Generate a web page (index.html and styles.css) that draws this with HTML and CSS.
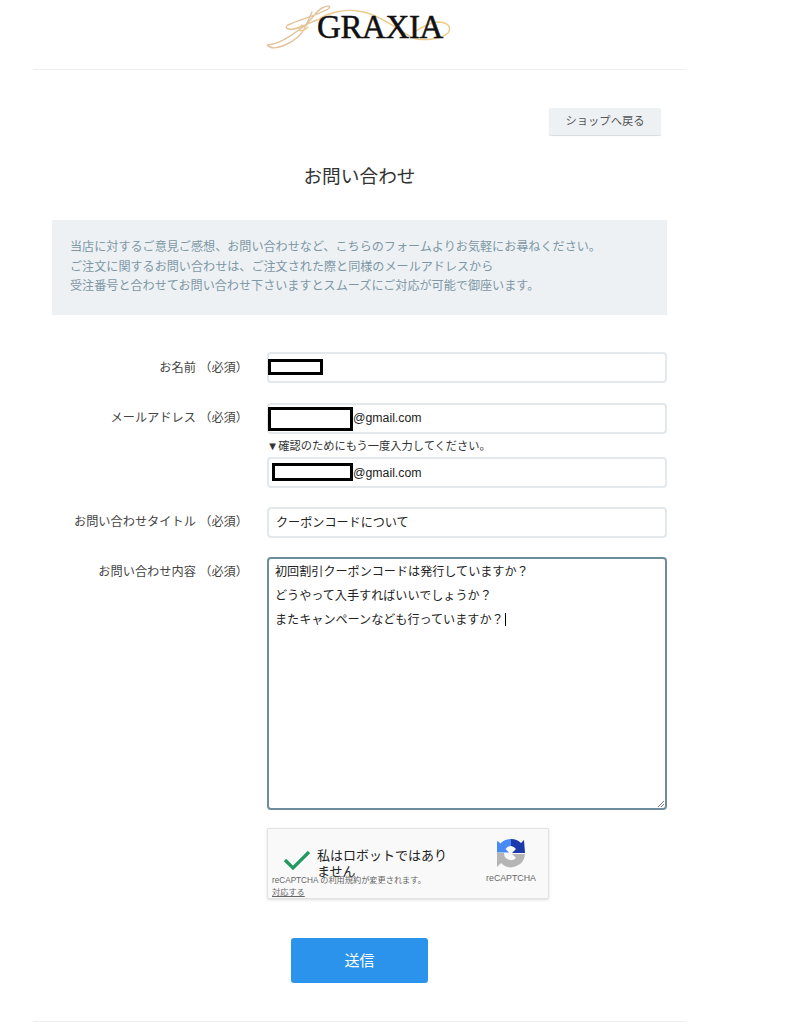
FILE: index.html
```html
<!DOCTYPE html>
<html lang="ja">
<head>
<meta charset="utf-8">
<title>お問い合わせ</title>
<link rel="stylesheet" href="styles.css">
</head>
<body>
<div class="page">
  <header class="site-header">
    <div class="logo">
      <svg class="logo-swirl" viewBox="0 0 190 50" width="190" height="50" aria-hidden="true">
        <g fill="none" stroke-linecap="round" stroke-width="1.4">
          <path d="M6 45 C18 44 30 35 41 27 C50 20 54 11 60 8 C66 5 70 6 66 9 C56 15 36 20 26 25 C20 29 30 31 38 27 C46 24 52 21 55 20" stroke="#e3c29a"/>
          <path d="M50 12 C46 20 44 30 36 37 C28 44 14 50 8 47 C5 46 5 45 6 45" stroke="#e3c29a"/>
          <path d="M40 25 C33 31 40 33 46 27 M56 20 C66 12 84 9 96 11 C118 14 136 30 151 38 C160 41 178 40 186 33 C190 27 186 22 175 22 C168 23 160 27 154 31" stroke="#ecca8c"/>
        </g>
      </svg>
      <span class="logo-text">GRAXIA</span>
    </div>
  </header>

  <main class="content">
    <div class="back-row"><a class="back-btn">ショップへ戻る</a></div>
    <h1 class="title">お問い合わせ</h1>
    <div class="notice">
      <p>当店に対するご意見ご感想、お問い合わせなど、こちらのフォームよりお気軽にお尋ねください。</p>
      <p>ご注文に関するお問い合わせは、ご注文された際と同様のメールアドレスから</p>
      <p>受注番号と合わせてお問い合わせ下さいますとスムーズにご対応が可能で御座います。</p>
    </div>

    <form class="form">
      <div class="row row-name">
        <div class="label">お名前 （必須）</div>
        <div class="control">
          <div class="field field-flush"><span class="redact redact-name"></span></div>
        </div>
      </div>
      <div class="row row-mail">
        <div class="label">メールアドレス （必須）</div>
        <div class="control">
          <div class="field field-flush"><span class="redact redact-mail1"></span><span class="mail">@gmail.com</span></div>
          <div class="hint">▼確認のためにもう一度入力してください。</div>
          <div class="field field-mail2"><span class="redact redact-mail2"></span><span class="mail">@gmail.com</span></div>
        </div>
      </div>
      <div class="row row-subject">
        <div class="label">お問い合わせタイトル （必須）</div>
        <div class="control">
          <div class="field"><span class="field-text">クーポンコードについて</span></div>
        </div>
      </div>
      <div class="row row-body">
        <div class="label">お問い合わせ内容 （必須）</div>
        <div class="control">
          <div class="textarea">
            <div>初回割引クーポンコードは発行していますか？</div>
            <div>どうやって入手すればいいでしょうか？</div>
            <div>またキャンペーンなども行っていますか？<span class="caret"></span></div>
            <svg class="grip" viewBox="0 0 8 8" width="8" height="8" aria-hidden="true"><path d="M1 7 L7 1 M4 7 L7 4" stroke="#777" stroke-width="1" fill="none"/></svg>
          </div>
          <div class="captcha">
            <svg class="check" viewBox="0 0 28 22" width="28" height="22" aria-hidden="true"><path d="M2 11 L10 19 L26 3" fill="none" stroke="#23985f" stroke-width="3.2"/></svg>
            <div class="captcha-label">私はロボットではありません</div>
            <div class="captcha-brand">
              <svg viewBox="0 0 30 30" width="30" height="30" aria-hidden="true">
                <path d="M15 1 L15 8 A7 7 0 0 0 9.5 11 L13 14.5 L1 14.5 L1 3 Q2 3 4.5 5.5 A14 14 0 0 1 15 1 Z" fill="#4a8af4"/>
                <path d="M15 1 A14 14 0 0 1 25 5 L28 2 L29 15 L16 15 L20 11 A7 7 0 0 0 15 8 Z" fill="#1c3aa9"/>
                <path d="M1 15 L8 15 A7 7 0 0 0 20 20 L16 16 L29 16 A14 14 0 0 1 5 25 L1 29 Z" fill="#b5b5b5"/>
              </svg>
              <span>reCAPTCHA</span>
            </div>
            <div class="captcha-note">reCAPTCHA の利用規約が変更されます。<br><u>対応する</u></div>
          </div>
        </div>
      </div>
      <div class="submit-row"><button type="button" class="submit">送信</button></div>
    </form>
  </main>
  <footer class="site-footer"></footer>
</div>
</body>
</html>
```
FILE: styles.css
```css
* { box-sizing: border-box; }
html, body { margin: 0; padding: 0; background: #fff; }
body {
  font-family: "Liberation Sans", "Noto Sans CJK JP", sans-serif;
  color: #333;
  font-size: 13px;
}
.page { width: 652px; margin-left: 33px; }

.site-header {
  height: 70px;
  border-bottom: 1px solid #eeeeee;
  display: flex;
  justify-content: center;
}
.logo { position: relative; width: 190px; height: 50px; margin-left: -4px; }
.logo-swirl { position: absolute; left: 0; top: 0; filter: blur(0.3px); }
.logo-text {
  position: absolute;
  left: 55px;
  top: 12px;
  font-family: "Liberation Serif", serif;
  font-size: 33px;
  line-height: 30px;
  color: #111;
  letter-spacing: -0.4px;
  -webkit-text-stroke: 0.5px #111;
}

.content { padding: 38px 18px 0 19px; }
.back-row { display: flex; justify-content: flex-end; padding-right: 6px; }
.back-btn {
  width: 112px;
  height: 27px;
  padding-bottom: 3px;
  background: #edf1f4;
  border-radius: 2px;
  box-shadow: 0 1px 1px rgba(0,0,0,.15);
  color: #555;
  font-size: 11.3px;
  display: flex;
  align-items: center;
  justify-content: center;
}
.title {
  margin: 28px 0 0;
  height: 27px;
  font-size: 18.7px;
  line-height: 27px;
  font-weight: 400;
  text-align: center;
  color: #333;
}
.notice {
  margin-top: 30px;
  height: 95px;
  background: #edf1f4;
  padding: 18px 18px 0;
  color: #7d97a5;
  font-size: 12.1px;
  line-height: 19.5px;
}
.notice p { margin: 0; }

.form { margin-top: 37px; }
.row { display: flex; }
.label {
  width: 196px;
  flex: none;
  margin-right: 19px;
  text-align: right;
  padding-top: 6px;
  font-size: 12.2px;
  line-height: 19px;
  color: #444;
}
.row-name .label { padding-top: 7px; }
.control { flex: 1; min-width: 0; }
.row-mail { margin-top: 20px; }
.row-subject { margin-top: 19px; }
.row-body { margin-top: 19px; }
.field {
  height: 31px;
  border: 2px solid #e3e8ec;
  border-radius: 4px;
  background: #fff;
  display: flex;
  align-items: center;
  padding-left: 7px;
  font-size: 12.1px;
  color: #222;
}
.field-text { margin-top: -2px; }
.mail { font-size: 12.3px; }
.field-flush { padding-left: 0; }
.field-flush .mail { margin-top: -2px; }
.field-mail2 { padding-left: 3px; }
.redact { display: block; flex: none; border: 3px solid #000; background: #fff; }
.redact-name { width: 55px; height: 16px; margin-left: -1px; margin-top: -2px; }
.redact-mail1 { width: 85px; height: 24px; margin-left: -1px; }
.redact-mail2 { width: 81px; height: 18px; margin-top: -1px; }
.hint { height: 23px; padding-top: 3px; font-size: 11.25px; line-height: 18px; color: #333; }
.textarea {
  position: relative;
  height: 253px;
  border: 2px solid #6f8c9c;
  border-radius: 4px;
  padding: 1px 6px 0;
  font-size: 12.1px;
  line-height: 24px;
  color: #222;
}
.caret { display: inline-block; width: 1px; height: 13px; background: #000; vertical-align: -2px; margin-left: 1px; }
.grip { position: absolute; right: 0; bottom: 0; }

.captcha {
  position: relative;
  margin-top: 18px;
  width: 282px;
  height: 71px;
  background: #f9f9f9;
  border: 1px solid #e2e2e2;
  border-radius: 2px;
  box-shadow: 0 1px 3px rgba(0,0,0,.14);
}
.check { position: absolute; left: 15px; top: 20px; }
.captcha-label {
  position: absolute;
  left: 49px;
  top: 19px;
  width: 131px;
  font-size: 13px;
  line-height: 16px;
  color: #222;
}
.captcha-brand {
  position: absolute;
  left: 211px;
  top: 9px;
  width: 64px;
  display: flex;
  flex-direction: column;
  align-items: center;
  gap: 4px;
  font-size: 8.8px;
  line-height: 12px;
  color: #666;
}
.captcha-note {
  position: absolute;
  left: 4px;
  top: 46px;
  font-size: 8.2px;
  line-height: 12px;
  color: #666;
}

.submit-row { padding-left: 239px; margin-top: 39px; }
.submit {
  display: block;
  width: 137px;
  height: 45px;
  padding-bottom: 3px;
  border: 0;
  border-radius: 3px;
  background: #2b93ec;
  color: #fff;
  font: inherit;
  font-size: 15px;
}
.site-footer { margin-top: 38px; border-top: 1px solid #eeeeee; height: 3px; }
```
